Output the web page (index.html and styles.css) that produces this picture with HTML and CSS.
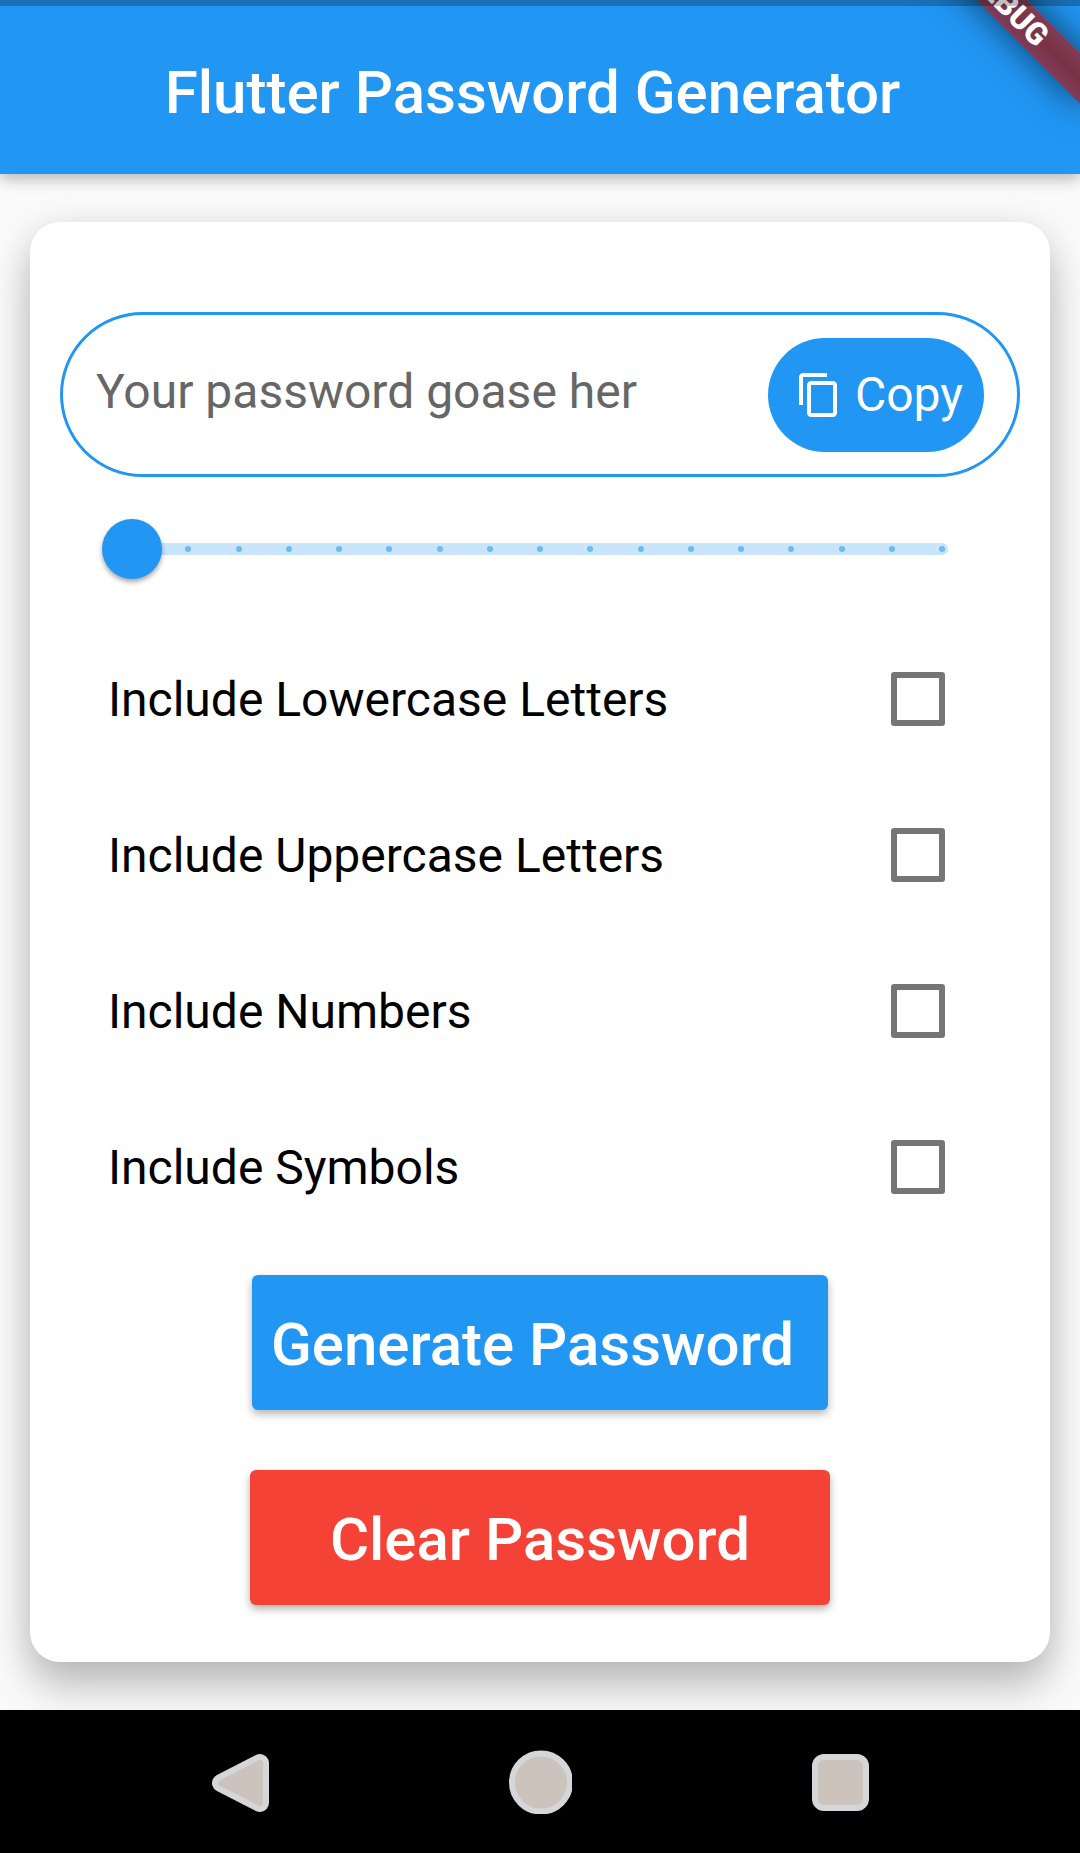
FILE: index.html
```html
<!DOCTYPE html>
<html lang="en">
<head>
  <meta charset="utf-8">
  <meta name="viewport" content="width=device-width, initial-scale=1">
  <title>Flutter Password Generator</title>
  <link rel="stylesheet" href="styles.css">
</head>
<body>
  <div class="screen">
    <header class="app-bar">
      <h1 class="app-title">Flutter Password Generator&nbsp;</h1>
      <div class="ribbon-clip"><span class="ribbon">DEBUG</span></div>
    </header>

    <main class="content">
      <form class="card">
        <div class="password-field">
          <input class="password-input" type="text" aria-label="Password" placeholder="Your password goase her">
          <button class="copy-button" type="button">
            <svg class="copy-icon" viewBox="0 0 24 24" aria-hidden="true"><path d="M16 1H4c-1.1 0-2 .9-2 2v14h2V3h12V1zm3 4H8c-1.1 0-2 .9-2 2v14c0 1.1.9 2 2 2h11c1.1 0 2-.9 2-2V7c0-1.1-.9-2-2-2zm0 16H8V7h11v14z"/></svg>
            <span>Copy</span>
          </button>
        </div>

        <div class="slider">
          <div class="slider-track" aria-hidden="true">
            <i class="tick"></i><i class="tick"></i><i class="tick"></i><i class="tick"></i><i class="tick"></i><i class="tick"></i><i class="tick"></i><i class="tick"></i><i class="tick"></i><i class="tick"></i><i class="tick"></i><i class="tick"></i><i class="tick"></i><i class="tick"></i><i class="tick"></i><i class="tick"></i><i class="tick"></i>
          </div>
          <input class="slider-input" type="range" min="8" max="24" step="1" value="8" aria-label="Password length">
        </div>

        <div class="options">
          <label class="option"><span>Include Lowercase Letters</span><input class="checkbox" type="checkbox"></label>
          <label class="option"><span>Include Uppercase Letters</span><input class="checkbox" type="checkbox"></label>
          <label class="option"><span>Include Numbers</span><input class="checkbox" type="checkbox"></label>
          <label class="option"><span>Include Symbols</span><input class="checkbox" type="checkbox"></label>
        </div>

        <div class="actions">
          <button class="action generate" type="button">Generate Password&nbsp;</button>
          <button class="action clear" type="button">Clear Password</button>
        </div>
      </form>
    </main>

    <nav class="system-nav" aria-label="System">
      <button class="nav-button" type="button" aria-label="Back">
        <svg class="nav-icon" viewBox="0 0 64 64"><path d="M13 33L52 13V53Z" class="back-rim"/><path d="M13 33L52 13V53Z" class="back-face"/></svg>
      </button>
      <button class="nav-button" type="button" aria-label="Home">
        <svg class="nav-icon" viewBox="0 0 64 64"><circle cx="33" cy="32.5" r="29" class="nav-shape"/></svg>
      </button>
      <button class="nav-button" type="button" aria-label="Recent apps">
        <svg class="nav-icon" viewBox="0 0 64 64"><rect x="7" y="7" width="51" height="51" rx="9" class="nav-shape"/></svg>
      </button>
    </nav>
  </div>
</body>
</html>
```
FILE: styles.css
```css
* {
  box-sizing: border-box;
}

body {
  margin: 0;
  background: #fafafa;
  color: #000;
  font-family: Roboto, "Noto Sans", sans-serif;
  font-size: 48px;
  line-height: 56px;
}

button,
input {
  margin: 0;
  padding: 0;
  border: 0;
  font: inherit;
}

button {
  cursor: pointer;
}

.screen {
  display: flex;
  flex-direction: column;
  min-height: 100vh;
}

/* App bar */
.app-bar {
  position: relative;
  z-index: 1;
  display: flex;
  justify-content: center;
  padding: 58px 48px 46px;
  background: #2196f3;
  box-shadow: 0 6px 12px rgba(0, 0, 0, 0.18), 0 2px 20px rgba(0, 0, 0, 0.1);
}

/* Translucent status bar strip, above the ribbon */
.app-bar::before {
  content: "";
  position: absolute;
  inset: 0 0 auto;
  z-index: 1;
  height: 6px;
  background: rgba(0, 0, 0, 0.25);
}

.app-title {
  margin: 0;
  color: #fff;
  font-size: 60px;
  font-weight: 500;
  line-height: 70px;
}

.ribbon-clip {
  position: absolute;
  inset: 0;
  overflow: hidden;
  pointer-events: none;
}

.ribbon {
  position: absolute;
  top: 18px;
  right: -120px;
  width: 240px;
  height: 36px;
  transform: rotate(45deg);
  transform-origin: 120px -84px;
  background: linear-gradient(#803c56, #7a3246 50%, #803c56);
  box-shadow: 0 0 36px rgba(0, 0, 0, 0.6);
  color: #fff;
  font-size: 31px;
  font-weight: 900;
  line-height: 36px;
  text-align: center;
}

/* Card */
.content {
  flex: 1;
  padding: 48px 30px;
}

.card {
  padding: 90px 30px 57px;
  border-radius: 30px;
  background: #fff;
  box-shadow: 0 27px 42px rgba(0, 0, 0, 0.2), 0 6px 36px rgba(0, 0, 0, 0.12);
}

.password-field {
  display: flex;
  align-items: center;
  height: 165px;
  padding: 0 33px;
  border: 3px solid #2196f3;
  border-radius: 83px;
}

.password-input {
  flex: 1;
  min-width: 0;
  height: 100%;
  padding-bottom: 6px;
  outline: 0;
  background: transparent;
  color: #000;
}

.password-input::placeholder {
  color: #666;
  opacity: 1;
}

.copy-button {
  display: flex;
  align-items: center;
  gap: 12px;
  height: 114px;
  padding: 0 21px 0 27px;
  border-radius: 57px;
  background: #2196f3;
  color: #fff;
}

.copy-icon {
  width: 48px;
  height: 48px;
  fill: currentColor;
}

/* Length slider */
.slider {
  display: grid;
  align-items: center;
  margin: 42px 42px 0;
  height: 60px;
}

.slider > * {
  grid-area: 1 / 1;
}

.slider-track {
  display: flex;
  align-items: center;
  justify-content: space-between;
  height: 12px;
  margin: 0 30px;
  padding: 0 3px;
  border-radius: 6px;
  background: #c8e5fc;
}

.tick {
  width: 6px;
  height: 6px;
  border-radius: 50%;
  background: #6dbaf8;
}

.slider-input {
  appearance: none;
  width: 100%;
  height: 60px;
  background: transparent;
}

.slider-input::-webkit-slider-thumb {
  appearance: none;
  width: 60px;
  height: 60px;
  border-radius: 50%;
  background: #2196f3;
  box-shadow: 0 3px 5px rgba(0, 0, 0, 0.35);
}

/* Options */
.options {
  margin-top: 42px;
  padding: 0 75px 0 48px;
}

.option {
  display: flex;
  align-items: center;
  justify-content: space-between;
  height: 156px;
}

.option span {
  padding-top: 2px;
}

.checkbox {
  appearance: none;
  width: 54px;
  height: 54px;
  border: 6px solid #757575;
  border-radius: 3px;
}

.checkbox:checked {
  border-color: #2196f3;
  background: #2196f3;
}

/* Actions */
.actions {
  display: flex;
  flex-direction: column;
  align-items: center;
  gap: 60px;
  margin-top: 30px;
}

.action {
  height: 135px;
  padding-top: 4px;
  border-radius: 6px;
  box-shadow: 0 4px 8px rgba(0, 0, 0, 0.3);
  color: #fff;
  font-size: 60px;
  font-weight: 500;
  line-height: 70px;
}

.generate {
  width: 60%;
  background: #2196f3;
}

.clear {
  width: calc(60% + 4px);
  background: #f44336;
}

/* System navigation */
.system-nav {
  position: relative;
  z-index: 1;
  display: flex;
  justify-content: center;
  gap: 236px;
  padding: 40px 0 39px;
  background: #000;
}

.nav-button {
  width: 64px;
  height: 64px;
  background: transparent;
}

.nav-icon {
  display: block;
  width: 64px;
  height: 64px;
}

.nav-shape {
  fill: #ccc3bd;
  stroke: #d5d6da;
  stroke-width: 6;
}

.back-rim {
  fill: #d5d6da;
  stroke: #d5d6da;
  stroke-width: 18;
  stroke-linejoin: round;
}

.back-face {
  fill: #ccc3bd;
  stroke: #ccc3bd;
  stroke-width: 6;
  stroke-linejoin: round;
}
```
